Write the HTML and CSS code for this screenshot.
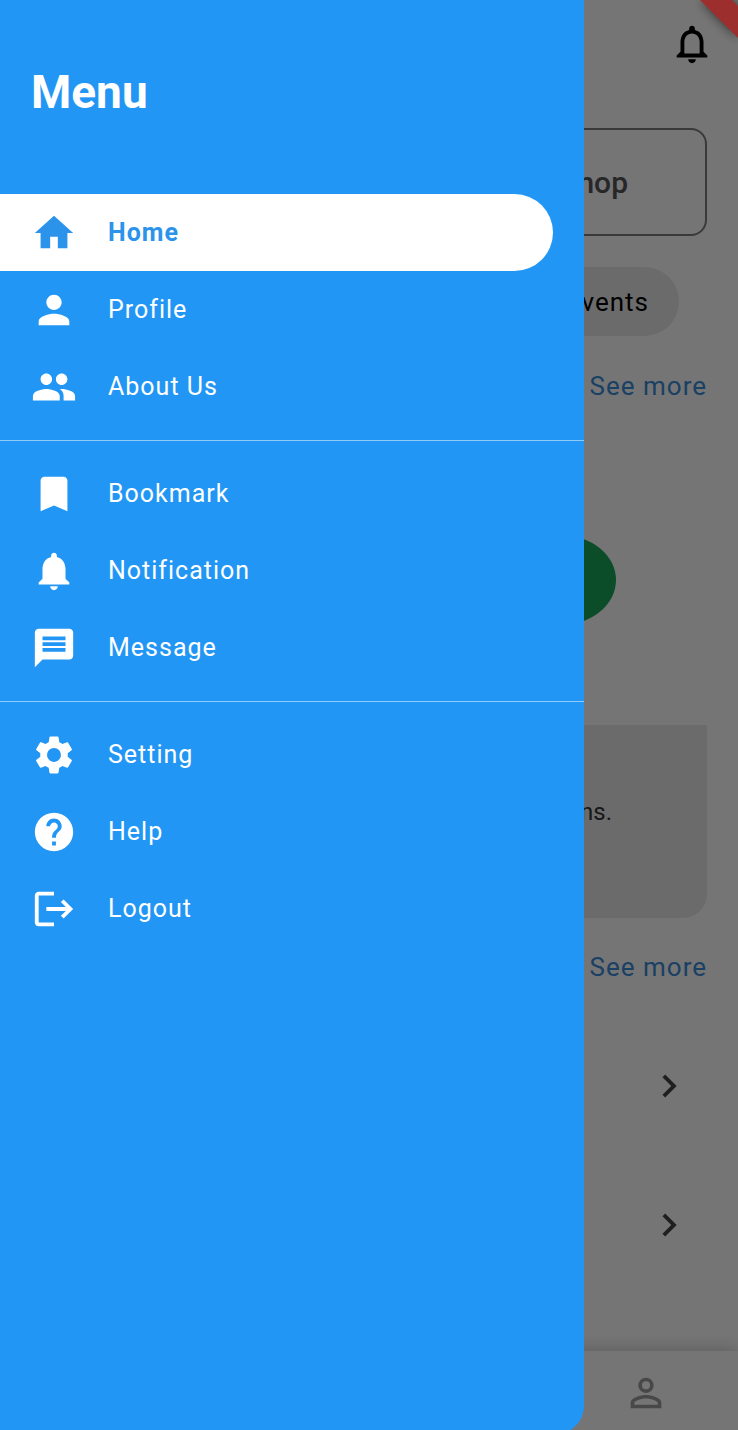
FILE: index.html
```html
<!DOCTYPE html>
<html lang="en">
<head>
<meta charset="utf-8">
<meta name="viewport" content="width=device-width, initial-scale=1">
<title>Menu</title>
<link rel="stylesheet" href="styles.css">
</head>
<body>
<div class="page">
  <header class="topbar">
    <button class="icon-button" type="button" aria-label="Notifications">
      <svg class="icon" viewBox="0 0 24 24"><path d="M12 22c1.1 0 2-.9 2-2h-4c0 1.1.9 2 2 2zm6-6v-5c0-3.07-1.63-5.64-4.5-6.32V4c0-.83-.67-1.5-1.5-1.5s-1.5.67-1.5 1.5v.68C7.64 5.36 6 7.92 6 11v5l-2 2v1h16v-1l-2-2zm-2 1H8v-6c0-2.48 1.51-4.5 4-4.5s4 2.02 4 4.5v6z"/></svg>
    </button>
  </header>
  <main class="content">
    <button class="shop" type="button">Shop</button>
    <button class="chip" type="button">Events</button>
    <a class="more" href="#">See more</a>
    <div class="banner"><span class="blob"></span></div>
    <section class="card"><p class="card-text">ns.</p></section>
    <a class="more" href="#">See more</a>
    <div class="list">
      <button class="row" type="button" aria-label="Open first entry">
        <svg class="icon" viewBox="0 0 24 24"><path d="M10 6L8.59 7.41 13.17 12l-4.58 4.59L10 18l6-6z"/></svg>
      </button>
      <button class="row" type="button" aria-label="Open second entry">
        <svg class="icon" viewBox="0 0 24 24"><path d="M10 6L8.59 7.41 13.17 12l-4.58 4.59L10 18l6-6z"/></svg>
      </button>
    </div>
  </main>
  <nav class="tabs" aria-label="Sections">
    <a class="tab" href="#" aria-label="Account">
      <svg class="icon" viewBox="0 0 24 24"><path d="M12 5.9a2.1 2.1 0 1 1 0 4.2 2.1 2.1 0 0 1 0-4.2m0 9c2.97 0 6.1 1.46 6.1 2.1v1.1H5.9V17c0-.64 3.13-2.1 6.1-2.1M12 4C9.79 4 8 5.79 8 8s1.79 4 4 4 4-1.79 4-4-1.79-4-4-4zm0 9c-2.67 0-8 1.34-8 4v3h16v-3c0-2.66-5.33-4-8-4z"/></svg>
    </a>
  </nav>
</div>
<div class="scrim"></div>
<svg class="ribbon" viewBox="0 0 70 70" aria-hidden="true"><path d="M18-14L84 52V20L50-14z"/></svg>
<aside class="drawer">
  <h1 class="title">Menu</h1>
  <nav class="menu" aria-label="Menu">
    <a class="item active" href="#" aria-current="page">
      <svg class="icon" viewBox="0 0 24 24"><path d="M10 20v-6h4v6h5v-8h3L12 3 2 12h3v8z"/></svg>Home</a>
    <a class="item" href="#">
      <svg class="icon" viewBox="0 0 24 24"><path d="M12 12c2.21 0 4-1.79 4-4s-1.79-4-4-4-4 1.790-4 4 1.790 4 4 4zm0 2c-2.670 0-8 1.340-8 4v2h16v-2c0-2.660-5.330-4-8-4z"/></svg>Profile</a>
    <a class="item" href="#">
      <svg class="icon" viewBox="0 0 24 24"><path d="M16 11c1.660 0 2.990-1.340 2.990-3S17.660 5 16 5s-3 1.340-3 3 1.340 3 3 3zm-8 0c1.660 0 2.990-1.340 2.990-3S9.660 5 8 5 5 6.340 5 8s1.340 3 3 3zm0 2c-2.330 0-7 1.170-7 3.500V19h14v-2.500c0-2.330-4.670-3.500-7-3.500zm8 0c-.29 0-.62.02-.97.05 1.160.84 1.970 1.970 1.970 3.450V19h6v-2.500c0-2.330-4.670-3.500-7-3.500z"/></svg>About Us</a>
    <hr class="divider">
    <a class="item" href="#">
      <svg class="icon" viewBox="0 0 24 24"><path d="M17 3H7c-1.100 0-1.990.9-1.990 2L5 21l7-3 7 3V5c0-1.100-.9-2-2-2z"/></svg>Bookmark</a>
    <a class="item" href="#">
      <svg class="icon" viewBox="0 0 24 24"><path d="M12 22c1.100 0 2-.9 2-2h-4c0 1.100.89 2 2 2zm6-6v-5c0-3.070-1.640-5.640-4.500-6.320V4c0-.83-.67-1.500-1.500-1.500s-1.500.67-1.500 1.500v.68C7.630 5.360 6 7.920 6 11v5l-2 2v1h16v-1l-2-2z"/></svg>Notification</a>
    <a class="item" href="#">
      <svg class="icon" viewBox="0 0 24 24"><path d="M20 2H4c-1.100 0-1.990.9-1.990 2L2 22l4-4h14c1.100 0 2-.9 2-2V4c0-1.100-.9-2-2-2zm-2 12H6v-2h12v2zm0-3H6V9h12v2zm0-3H6V6h12v2z"/></svg>Message</a>
    <hr class="divider">
    <a class="item" href="#">
      <svg class="icon" viewBox="0 0 24 24"><path d="M19.140 12.940c.04-.3.060-.61.060-.94 0-.32-.02-.64-.07-.94l2.030-1.580c.18-.14.230-.41.120-.61l-1.920-3.320c-.12-.22-.37-.29-.59-.22l-2.390.96c-.5-.38-1.030-.7-1.620-.94l-.36-2.540c-.04-.24-.24-.41-.48-.41h-3.840c-.24 0-.43.170-.47.410l-.36 2.540c-.59.240-1.130.570-1.620.940l-2.390-.96c-.22-.08-.47 0-.59.220L2.740 8.870c-.12.210-.08.470.120.610l2.030 1.580c-.05.3-.09.630-.09.940s.02.640.070.940l-2.030 1.580c-.18.140-.23.410-.12.610l1.920 3.320c.12.220.37.290.59.220l2.390-.96c.5.380 1.030.7 1.620.940l.36 2.540c.05.240.24.410.48.410h3.840c.24 0 .44-.17.470-.41l.36-2.540c.59-.24 1.130-.56 1.620-.94l2.390.96c.22.080.47 0 .59-.22l1.920-3.320c.12-.22.070-.47-.12-.61l-2.010-1.580zM12 15.600c-1.980 0-3.600-1.620-3.600-3.600s1.620-3.600 3.600-3.600 3.600 1.620 3.600 3.600-1.620 3.600-3.600 3.600z"/></svg>Setting</a>
    <a class="item" href="#">
      <svg class="icon" viewBox="0 0 24 24"><path d="M12 2C6.480 2 2 6.480 2 12s4.480 10 10 10 10-4.480 10-10S17.520 2 12 2zm1 17h-2v-2h2v2zm2.070-7.750l-.9.920C13.450 12.900 13 13.500 13 15h-2v-.5c0-1.100.45-2.100 1.170-2.830l1.240-1.260c.37-.36.590-.86.590-1.410 0-1.100-.9-2-2-2s-2 .9-2 2H8c0-2.210 1.790-4 4-4s4 1.790 4 4c0 .88-.36 1.680-.93 2.250z"/></svg>Help</a>
    <a class="item" href="#">
      <svg class="icon" viewBox="0 0 24 24"><path d="M17 7l-1.410 1.410L18.170 11H8v2h10.170l-2.580 2.580L17 17l5-5zM4 5h8V3H4c-1.100 0-2 .9-2 2v14c0 1.100.9 2 2 2h8v-2H4V5z"/></svg>Logout</a>
  </nav>
</aside>
</body>
</html>
```
FILE: styles.css
```css
* {
  box-sizing: border-box;
}

body {
  margin: 0;
  font-family: Roboto, "Liberation Sans", sans-serif;
  background: #fff;
}

button {
  font: inherit;
  color: inherit;
  border: 0;
  padding: 0;
  background: none;
}

a {
  color: inherit;
  text-decoration: none;
}

.icon {
  display: block;
  flex: none;
  width: 46px;
  height: 46px;
  fill: currentColor;
}

.page {
  display: flex;
  flex-direction: column;
  min-height: 100vh;
  overflow: hidden;
}

.topbar {
  display: flex;
  justify-content: flex-end;
  padding: 21px 23px;
}

.content {
  display: flex;
  flex: 1;
  flex-direction: column;
  align-items: flex-end;
  padding: 40px 31px 0;
}

.shop {
  width: 50%;
  height: 108px;
  padding-right: 77px;
  border: 2px solid #7f7f84;
  border-radius: 16px;
  color: #56565a;
  font-size: 30px;
  font-weight: 500;
  text-align: right;
}

.chip {
  height: 69px;
  margin: 31px 28px 30px 0;
  padding: 0 30px;
  border-radius: 35px;
  background: #eaeaea;
  color: #000;
  font-size: 26px;
  letter-spacing: 1px;
}

.more {
  color: #3a8cda;
  font-size: 26px;
  line-height: 40px;
  letter-spacing: 1px;
}

.banner {
  display: flex;
  align-self: stretch;
  align-items: center;
  justify-content: flex-end;
  height: 290px;
  margin-top: 29px;
  padding-right: 91px;
}

.blob {
  width: 110px;
  height: 90px;
  border-radius: 50%;
  background: #18a858;
}

.card {
  display: flex;
  align-self: stretch;
  align-items: center;
  justify-content: flex-end;
  height: 193px;
  margin-bottom: 29px;
  padding: 0 95px 20px 31px;
  border-radius: 0 0 24px 24px;
  background: #eaeaea;
}

.card-text {
  margin: 0;
  color: #333;
  font-size: 24px;
}

.list {
  display: flex;
  align-self: stretch;
  flex-direction: column;
  gap: 31px;
  margin-top: 45px;
}

.row {
  display: flex;
  align-items: center;
  justify-content: flex-end;
  height: 108px;
  padding-right: 15px;
  color: #444448;
}

.tabs {
  display: flex;
  justify-content: flex-end;
  height: 79px;
  box-shadow: 0 -2px 16px rgba(0, 0, 0, 0.2);
}

.tab {
  display: flex;
  align-items: center;
  justify-content: center;
  width: 25%;
  padding-top: 5px;
  color: #9e9e9e;
}

.scrim {
  position: fixed;
  inset: 0;
  background: rgba(0, 0, 0, 0.54);
}

.ribbon {
  position: fixed;
  top: 0;
  right: 0;
  width: 70px;
  height: 70px;
  fill: #9c2e2e;
  filter: drop-shadow(0 0 6px rgba(0, 0, 0, 0.6));
}

.drawer {
  position: fixed;
  top: 0;
  bottom: -4px;
  left: 0;
  width: calc(100% - 154px);
  border-radius: 0 0 28px;
  background: #2196f5;
  color: #fff;
}

.title {
  margin: 0;
  padding: 65px 31px 75px;
  font-size: 46px;
  font-weight: 700;
  line-height: 54px;
}

.item {
  display: flex;
  align-items: center;
  gap: 31px;
  height: 77px;
  margin-right: 31px;
  padding-left: 31px;
  font-size: 25px;
  letter-spacing: 1px;
}

.active {
  border-radius: 0 39px 39px 0;
  background: #fff;
  color: #2b93ea;
  font-weight: 700;
}

.divider {
  height: 1px;
  margin: 15px 0 14px;
  border: 0;
  background: rgba(255, 255, 255, 0.5);
}
```
